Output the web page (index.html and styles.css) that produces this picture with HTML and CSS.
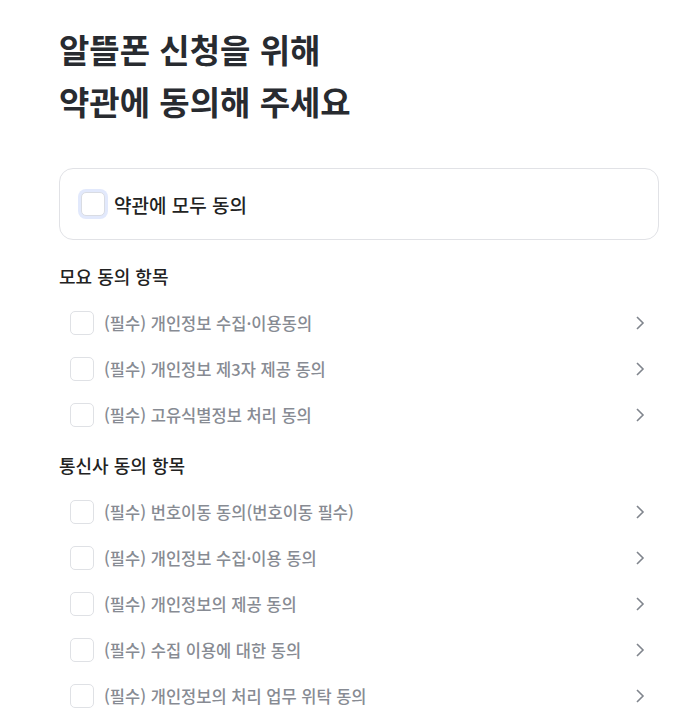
FILE: index.html
```html
<!DOCTYPE html>
<html lang="ko">
<head>
    <meta charset="utf-8">
    <title>약관 동의</title>
    <link rel="stylesheet" href="styles.css">
</head>
<body>
    <div class="page">
        <h1 class="title">알뜰폰 신청을 위해<br>약관에 동의해 주세요</h1>

        <label class="all-card">
            <span class="check check-all"></span>
            <span class="all-text">약관에 모두 동의</span>
        </label>

        <h2 class="section-title">모요 동의 항목</h2>
        <ul class="terms">
            <li class="term"><span class="check"></span><span class="term-text">(필수) 개인정보 수집·이용동의</span><svg class="chevron" viewBox="0 0 10 16"><path d="M2 2l6 6-6 6"/></svg></li>
            <li class="term"><span class="check"></span><span class="term-text">(필수) 개인정보 제3자 제공 동의</span><svg class="chevron" viewBox="0 0 10 16"><path d="M2 2l6 6-6 6"/></svg></li>
            <li class="term"><span class="check"></span><span class="term-text">(필수) 고유식별정보 처리 동의</span><svg class="chevron" viewBox="0 0 10 16"><path d="M2 2l6 6-6 6"/></svg></li>
        </ul>

        <h2 class="section-title second">통신사 동의 항목</h2>
        <ul class="terms">
            <li class="term"><span class="check"></span><span class="term-text">(필수) 번호이동 동의(번호이동 필수)</span><svg class="chevron" viewBox="0 0 10 16"><path d="M2 2l6 6-6 6"/></svg></li>
            <li class="term"><span class="check"></span><span class="term-text">(필수) 개인정보 수집·이용 동의</span><svg class="chevron" viewBox="0 0 10 16"><path d="M2 2l6 6-6 6"/></svg></li>
            <li class="term"><span class="check"></span><span class="term-text">(필수) 개인정보의 제공 동의</span><svg class="chevron" viewBox="0 0 10 16"><path d="M2 2l6 6-6 6"/></svg></li>
            <li class="term"><span class="check"></span><span class="term-text">(필수) 수집 이용에 대한 동의</span><svg class="chevron" viewBox="0 0 10 16"><path d="M2 2l6 6-6 6"/></svg></li>
            <li class="term"><span class="check"></span><span class="term-text">(필수) 개인정보의 처리 업무 위탁 동의</span><svg class="chevron" viewBox="0 0 10 16"><path d="M2 2l6 6-6 6"/></svg></li>
        </ul>
    </div>
</body>
</html>
```

FILE: styles.css
```css
body {
    margin: 0;
    padding: 0;
    background-color: #fff;
    color: #222;
    font-family: "Noto Sans CJK KR", "Noto Sans", sans-serif;
}

.page {
    width: 600px;
    padding: 23px 0 0 59px;
}

.title {
    margin: 0 0 41px;
    font-size: 33px;
    font-weight: 700;
    line-height: 52px;
    color: #282b30;
}

.all-card {
    display: flex;
    align-items: center;
    gap: 9px;
    height: 70px;
    padding: 0 20px;
    border: 1px solid #e1e2e6;
    border-radius: 14px;
}

.all-text {
    font-size: 19px;
    font-weight: 500;
    color: #222;
}

.check {
    flex: none;
    width: 22px;
    height: 22px;
    border: 1px solid #dfe1e5;
    border-radius: 5px;
    background-color: #fff;
}

.check-all {
    margin-left: 1px;
    border-color: #d9dce3;
    box-shadow: 0 0 0 3px #e2e9fc;
}

.section-title {
    margin: 24px 0 12px;
    font-size: 18px;
    font-weight: 500;
    line-height: 24px;
    color: #222;
}

.section-title.second {
    margin-top: 15px;
}

.terms {
    list-style: none;
    margin: 0;
    padding: 0;
}

.term {
    display: flex;
    align-items: center;
    height: 46px;
    padding: 0 14px 0 11px;
}

.term-text {
    flex: 1;
    margin-left: 10px;
    font-size: 16.5px;
    font-weight: 500;
    color: #878b93;
}

.chevron {
    width: 10px;
    height: 16px;
    fill: none;
    stroke: #80858d;
    stroke-width: 1.6;
}
```
